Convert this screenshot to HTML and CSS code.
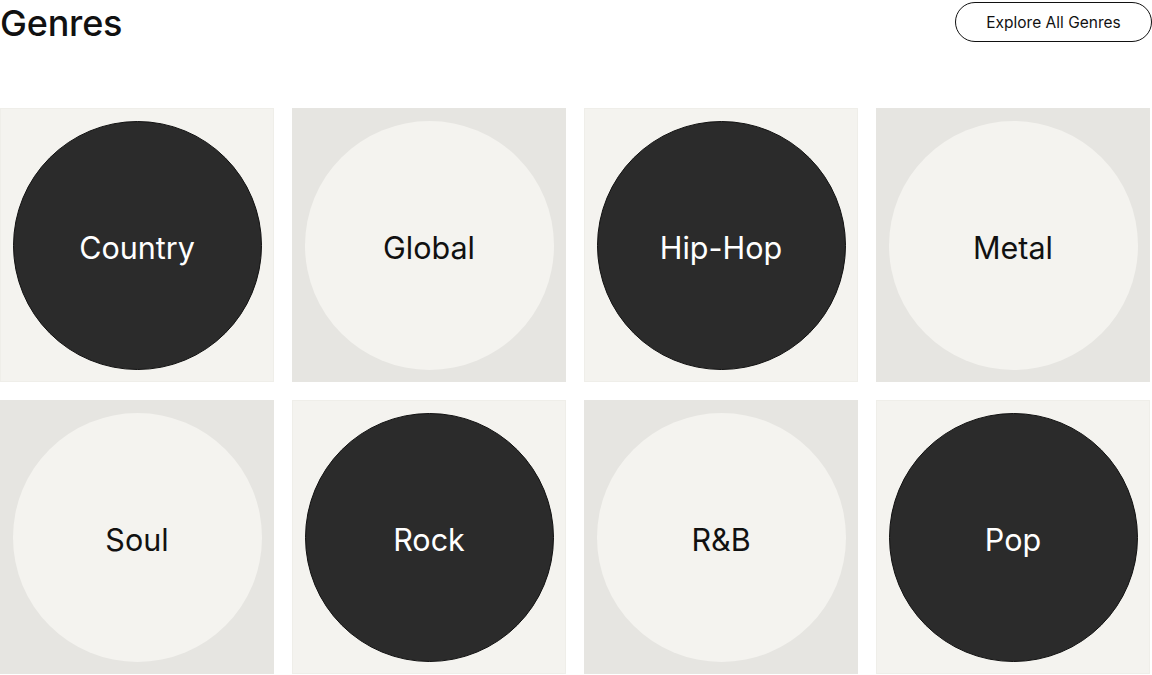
FILE: index.html
```html
<!DOCTYPE html>
<html lang="en">
<head>
  <meta charset="UTF-8" />
  <title>Genres</title>
  <link rel="stylesheet" href="styles.css">
</head>
<body>
  <div class="page">
    <div class="header">
      <h1>Genres</h1>
      <a href="#" class="explore">Explore All Genres</a>
    </div>

    <div class="grid">
      <a href="#" class="tile light"><span class="disc dark">Country</span></a>
      <a href="#" class="tile shade"><span class="disc pale">Global</span></a>
      <a href="#" class="tile light"><span class="disc dark">Hip-Hop</span></a>
      <a href="#" class="tile shade"><span class="disc pale">Metal</span></a>
      <a href="#" class="tile shade"><span class="disc pale">Soul</span></a>
      <a href="#" class="tile light"><span class="disc dark">Rock</span></a>
      <a href="#" class="tile shade"><span class="disc pale">R&amp;B</span></a>
      <a href="#" class="tile light"><span class="disc dark">Pop</span></a>
    </div>
  </div>
</body>
</html>
```

FILE: styles.css
```css
body { margin: 0; background: white; font-family: Inter, "Liberation Sans", Arial, sans-serif; color: #111; }
.page { width: 1152px; }

.header {
  display: flex; justify-content: space-between; align-items: center;
  height: 44px; margin-bottom: 64px;
}
.header h1 { margin: 0; font-size: 36px; font-weight: 500; letter-spacing: -0.2px; padding-top: 2px; }
.explore {
  display: flex; align-items: center; justify-content: center;
  width: 197px; height: 40px; box-sizing: border-box;
  border: 1.5px solid #111; border-radius: 20px;
  color: #111; text-decoration: none; font-size: 15.5px;
}

.grid {
  width: 1150px;
  display: grid; grid-template-columns: repeat(4, 274px); grid-auto-rows: 274px; gap: 18px;
}
.tile {
  display: flex; align-items: center; justify-content: center;
  text-decoration: none; box-sizing: border-box;
}
.tile.light { background: #f4f3ef; border: 1px solid #efeee9; }
.tile.shade { background: #e6e5e1; }

.disc {
  width: 249px; height: 249px; border-radius: 50%; box-sizing: border-box;
  display: flex; align-items: center; justify-content: center;
  padding-top: 4px; font-size: 30.5px;
}
.disc.dark { background: #2b2b2b; color: white; border: 1px solid #111; }
.disc.pale { background: #f4f3ef; color: #111; }
```
